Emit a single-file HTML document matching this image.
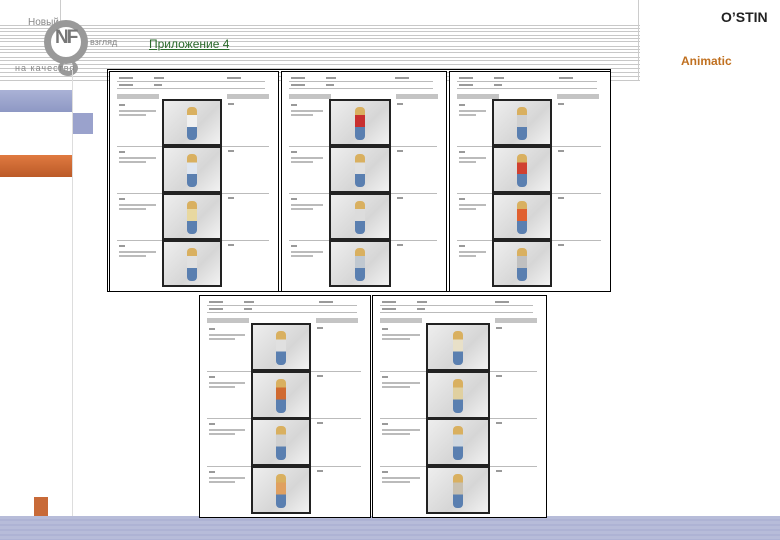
<!DOCTYPE html>
<html><head><meta charset="utf-8"><style>
body{margin:0;width:780px;height:540px;position:relative;overflow:hidden;background:#fff;font-family:"Liberation Sans",sans-serif}
.a{position:absolute}
.hl{position:absolute;height:1px;background:#c8c8c8}
.panel{position:absolute;background:#fff;border:1px solid #000}
.fr{position:absolute;background:#222;}
.fr i{position:absolute;left:2px;right:2px;top:2px;bottom:2px;background:linear-gradient(135deg,#eee,#d6d6d6 60%,#f2f2f2)}
.fig{position:absolute;width:10px;border-radius:4px}
.tl{position:absolute;height:1px;background:#bbb}
.gb{position:absolute;height:5px;background:#c4c4c4}
.tx{position:absolute;height:2px;background:#9a9a9a}
</style></head><body>
<!-- header lines -->
<div id="lines"></div>
<div class="a" style="left:638px;top:0;width:1px;height:80px;background:#ccc"></div>
<div class="a" style="left:60px;top:0;width:1px;height:25px;background:#ccc"></div>
<div class="a" style="left:28px;top:17px;font-size:10px;color:#888">Новый</div>
<div class="a" style="left:44px;top:20px;width:44px;height:44px;border-radius:50%;border:7px solid #999;box-sizing:border-box;background:#fff"></div>
<div class="a" style="left:55px;top:27px;font-size:19px;font-weight:bold;color:#777;letter-spacing:-2px">NF</div>
<div class="a" style="left:58px;top:60px;width:20px;height:16px;border-radius:50%;border:5px solid #999;box-sizing:border-box;border-top:none"></div>
<div class="a" style="left:90px;top:37px;font-size:9px;color:#888">взгляд</div>
<div class="a" style="left:15px;top:63px;font-size:9px;color:#888;letter-spacing:1px">на качество</div>
<div class="a" style="left:149px;top:37px;font-size:12px;color:#2a6a2a;text-decoration:underline">Приложение 4</div>
<div class="a" style="left:721px;top:9px;font-size:14px;font-weight:bold;color:#222">O’STIN</div>
<div class="a" style="left:681px;top:54px;font-size:12px;font-weight:bold;color:#c07020">Animatic</div>
<!-- left decorations -->
<div class="a" style="left:0;top:90px;width:72px;height:22px;background:linear-gradient(#aab2d6,#8e98c4)"></div>
<div class="a" style="left:72px;top:113px;width:21px;height:21px;background:#9aa2cc"></div>
<div class="a" style="left:0;top:155px;width:72px;height:22px;background:linear-gradient(#e07a40,#bb5a28)"></div>
<div class="a" style="left:72px;top:70px;width:1px;height:450px;background:#ddd"></div>
<div class="a" style="left:34px;top:497px;width:14px;height:19px;background:#c86a38"></div>
<div class="a" style="left:0;top:516px;width:780px;height:24px;background:repeating-linear-gradient(#b7bcd9 0 3px,#aeb3d4 3px 5px)"></div>
<div class="a" style="left:107px;top:69px;width:504px;height:223px;border:1px solid #000;box-sizing:border-box"></div>
<div id="panels"></div>
<script>
var L=document.getElementById('lines'),h='';
[25,28,31,35,38,41,46,49,52,57,60,64,68,72,76,80].forEach(function(y){h+='<div class="hl" style="left:0;top:'+y+'px;width:640px"></div>'});
L.innerHTML=h;
function panel(x,y,w,hh,ix,iw,rows,cols){
 var s='<div class="panel" style="left:'+x+'px;top:'+y+'px;width:'+w+'px;height:'+hh+'px"></div>';
 s+='<div class="tx" style="left:'+(x+10)+'px;top:'+(y+6)+'px;width:14px"></div><div class="tx" style="left:'+(x+45)+'px;top:'+(y+6)+'px;width:10px"></div><div class="tx" style="left:'+(x+w-50)+'px;top:'+(y+6)+'px;width:14px"></div>';
 s+='<div class="tl" style="left:'+(x+8)+'px;top:'+(y+10)+'px;width:'+(w-20)+'px"></div>';
 s+='<div class="tx" style="left:'+(x+10)+'px;top:'+(y+13)+'px;width:14px"></div><div class="tx" style="left:'+(x+45)+'px;top:'+(y+13)+'px;width:8px"></div>';
 s+='<div class="tl" style="left:'+(x+8)+'px;top:'+(y+17)+'px;width:'+(w-20)+'px"></div>';
 s+='<div class="gb" style="left:'+(x+8)+'px;top:'+(y+23)+'px;width:42px"></div><div class="gb" style="left:'+(ix+iw+5)+'px;top:'+(y+23)+'px;width:42px"></div>';
 var top=y+28,rh=(y+hh-3-top)/rows;
 for(var r=0;r<rows;r++){var ry=Math.round(top+r*rh);
  s+='<div class="fr" style="left:'+ix+'px;top:'+ry+'px;width:'+iw+'px;height:'+Math.round(rh)+'px"><i></i></div>';
  var c=cols[r%cols.length];
  s+='<div class="fig" style="left:'+(ix+iw/2-5)+'px;top:'+(ry+8)+'px;height:'+Math.round(rh-14)+'px;background:linear-gradient(#d9b060 0 25%,'+c+' 25% 60%,#5a7fb0 60%)"></div>';
  if(r>0)s+='<div class="tl" style="left:'+(x+8)+'px;top:'+ry+'px;width:'+(ix-x-8)+'px"></div><div class="tl" style="left:'+(ix+iw)+'px;top:'+ry+'px;width:'+(x+w-ix-iw-8)+'px"></div>';
  s+='<div class="tx" style="left:'+(x+10)+'px;top:'+(ry+5)+'px;width:6px"></div><div class="tx" style="left:'+(x+10)+'px;top:'+(ry+11)+'px;width:'+(ix-x-16)+'px;background:#bbb"></div><div class="tx" style="left:'+(x+10)+'px;top:'+(ry+15)+'px;width:'+(ix-x-26)+'px;background:#bbb"></div><div class="tx" style="left:'+(ix+iw+6)+'px;top:'+(ry+4)+'px;width:6px"></div>';
 }
 return s;
}
var P='';
P+=panel(109,71,168,219,162,60,4,['#f0f0f0','#dfe6f0','#e8d8a0','#e0e0e0']);
P+=panel(281,71,164,219,329,62,4,['#c83030','#e0e0e0','#dcdcdc','#c0c8d0']);
P+=panel(449,71,160,219,492,60,4,['#d0d0d0','#d04030','#e06030','#c0c0c0']);
P+=panel(199,295,170,221,251,60,4,['#e0e0e0','#d06a30','#d0d0d0','#e0a060']);
P+=panel(372,295,173,221,426,64,4,['#e8e0c8','#e0d0a0','#d0d8e0','#c8c0b0']);
document.getElementById('panels').innerHTML=P;
</script>
</body></html>
